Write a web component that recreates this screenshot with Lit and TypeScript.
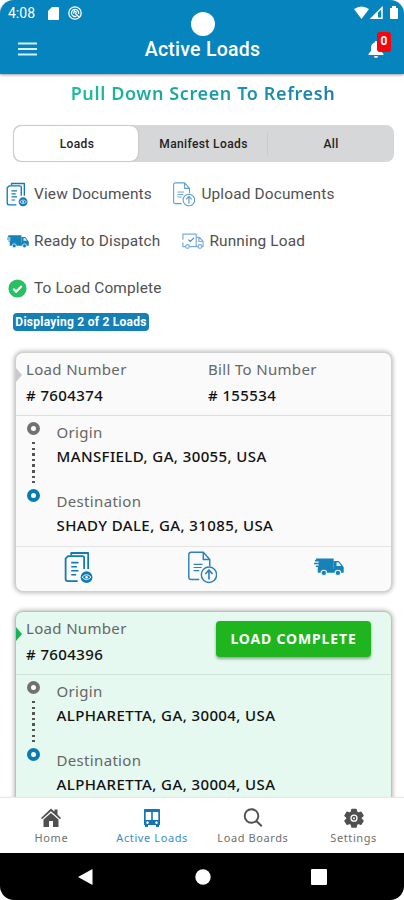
import { LitElement, html, css, svg, nothing } from "lit";
import { customElement, property } from "lit/decorators.js";
import { classMap } from "lit/directives/class-map.js";

const docLines = svg`<path d="M9 14h9M9 19h7M9 24h9M9 29h6" stroke-width="2"/>`;

const icons = {
  view: html`<svg viewBox="0 0 36 40" fill="none" stroke="#1179b5" stroke-width="2.2" stroke-linejoin="round">
    <path d="M9 5V2h21v20"/><path d="M17 37H5q-3 0-3-3V9l3-3h18q2 0 2 2v14"/>${docLines}
    <circle cx="28" cy="32" r="7.3" fill="#1179b5" stroke="none"/>
    <path d="M22.500 32q5.500-6 11 0q-5.500 6-11 0z" stroke="#fff" stroke-width="1.200"/><circle cx="28" cy="32" r="1.500" fill="#fff" stroke="none"/></svg>`,
  upload: html`<svg viewBox="0 0 36 40" fill="none" stroke="#2b80bf" stroke-width="1.800" stroke-linejoin="round">
    <path d="M14 35H4q-3 0-3-3V4q0-3 3-3h15l8 9v8M19 1v9h8"/><path d="M7 16h11M7 20h10M7 24h7" stroke-width="1.500"/>
    <circle cx="26" cy="29" r="9.500"/><path d="M26 35V24M21.500 28l4.500-5l4.500 5" stroke-width="2"/></svg>`,
  truck: html`<svg viewBox="0 0 32 20" fill="#1682b8">
    <path d="M2 1h19v12H4v-3H2V8.500h3V7H0V5.500h5V4H1V2.500h1z"/><path d="M21 3.500h5.500l4 5l1.200 2v5.500H4v-4h17z"/>
    <path d="M24 5h2.200l3 4H24z" fill="#d8edf8"/><g stroke="#e4f2f9" stroke-width="1.200"><circle cx="10.500" cy="16.300" r="2.900"/><circle cx="25.500" cy="16.300" r="2.900"/></g></svg>`,
  running: html`<svg viewBox="0 0 24 18" fill="none" stroke="#79addb" stroke-width="1.300">
    <path d="M4 14.500H1V10M1 7V1h14.500v13.500H8M15.500 4.500h3.500l4 4.500v5.500h-1.500M17.500 14.500h-2M18.500 5v4h4"/><path d="M7 7l2 2l4-4" stroke="#3689c8"/>
    <circle cx="6" cy="14.500" r="2"/><circle cx="19.500" cy="14.500" r="2"/></svg>`,
  done: html`<svg viewBox="0 0 20 20"><circle cx="10" cy="10" r="9.500" fill="#27c063"/><path d="M5.500 10.300l3 3l6-6" fill="none" stroke="#fff" stroke-width="2.300"/></svg>`,
  home: html`<svg viewBox="0 0 20 20" fill="#505050"><path d="M10 .5l3.500 3.300V1.500h3v5L20 10l-1 1.200L10 3.300L1 11.200L0 10z"/><path d="M10 5l7.500 6.500V19H12v-6H8v6H2.500v-7.500z"/></svg>`,
  bus: html`<svg viewBox="0 0 18 20" fill="#1476b4"><path fill-rule="evenodd" d="M2 1h14q1 0 1 1v15h-1v2h-3v-2H5v2H2v-2H1V2q0-1 1-1zM2.700 4v8h5.500V4zM9.800 4v8h5.500V4zM4.500 13.300a1.300 1.300 0 1 0 .01 0zM13.500 13.300a1.300 1.300 0 1 0 .01 0z"/></svg>`,
  search: html`<svg viewBox="0 0 20 20" fill="none" stroke="#505050" stroke-width="1.900"><circle cx="8.500" cy="8" r="6.800"/><path d="M13.300 13l5.500 5.300"/></svg>`,
  gear: html`<svg viewBox="0 0 20 20"><path fill="#505050" stroke="#505050" stroke-width="1.500" stroke-linejoin="round" d="M8 1.500h4l.6 2.700l1.900 1L17 4.300l2 3.400L17 9.500v1.500l2 1.800l-2 3.400l-2.600-.9l-1.800 1L12 19H8l-.6-2.700l-1.900-1L3 16.200l-2-3.400L3 11V9.500L1 7.700l2-3.400l2.500.9l1.900-1z"/><circle cx="10" cy="10.200" r="3" fill="none" stroke="#fff" stroke-width="1.300"/><circle cx="10" cy="10.200" r="1" fill="#fff"/></svg>`,
};

interface Load {
  number: string;
  billTo?: string;
  origin: string;
  destination: string;
  complete?: boolean;
}

const loads: Load[] = [
  { number: "7604374", billTo: "155534", origin: "MANSFIELD, GA, 30055, USA", destination: "SHADY DALE, GA, 31085, USA" },
  { number: "7604396", origin: "ALPHARETTA, GA, 30004, USA", destination: "ALPHARETTA, GA, 30004, USA", complete: true },
];

@customElement("load-card")
export class LoadCard extends LitElement {
  @property({ attribute: false }) load!: Load;

  static styles = css`
    :host { display: block; }
    * { box-sizing: border-box; }
    svg { display: block; }
    .card { position: relative; height: 240px; border: 1px solid #cfcfcf; border-radius: 8px; background: #fafafa;
      box-shadow: 0 0 4px 1px rgba(0, 0, 0, 0.27); font-family: "Noto Sans", sans-serif; color: #111; }
    .complete { background: #e5f9f0; border-color: #a3d3ad; }
    .marker { position: absolute; left: 0; top: 15px; border: 7px solid transparent; border-left: 6px solid #c9c9c9; border-right: 0; }
    .complete .marker { border-left-color: #17b557; }
    .head { display: grid; grid-template-columns: 182px 1fr; height: 63px; padding: 4px 0 0 10px; border-bottom: 1px solid #dedede; }
    .complete .head { border-color: #cfe3d9; }
    .label { font-size: 15px; line-height: 24px; letter-spacing: 0.33px; color: #666; white-space: nowrap; }
    .value { font-size: 15px; line-height: 25px; font-weight: 500; letter-spacing: 0.4px; white-space: nowrap; }
    .head .value { line-height: 29px; }
    .route { display: grid; grid-template-columns: 39.500px 1fr; height: 130px; padding: 4px 0 0 1px; }
    .rail { display: flex; flex-direction: column; align-items: center; padding: 2px 6px 0 0; }
    .ring { width: 13px; height: 13px; border: 4px solid #717171; border-radius: 50%; background: #fff; }
    .ring.to { border-color: #087bb5; }
    .dots { width: 2.500px; height: 41px; margin: 7px 1px 6px 0; background: repeating-linear-gradient(#555 0 2.500px, transparent 2.500px 5.600px); }
    .stop { height: 69px; }
    .actions { display: grid; grid-template-columns: repeat(3, 1fr); justify-items: center; height: 46px; border-top: 1px solid #e5e5e5; padding: 4px 2px 0 0; }
    .doc svg { width: 29px; height: 33px; }
    .ship { padding: 6px 0 0 4px; }
    .ship svg { width: 30px; height: 20px; }
    .button { width: 155px; height: 36px; margin: 5px 0 0 8px; padding: 0; border: 0; border-radius: 4px; background: #1eb51e; color: #fff;
      font: 700 14px/34px "Noto Sans", sans-serif; letter-spacing: 0.85px; box-shadow: 0 2px 3px rgba(0, 0, 0, 0.35); white-space: nowrap; }
  `;

  render() {
    const l = this.load;
    return html`<article class=${classMap({ card: true, complete: !!l.complete })}>
      <div class="marker"></div>
      <div class="head">
        <div><div class="label">Load Number</div><div class="value"># ${l.number}</div></div>
        ${l.complete
          ? html`<button class="button">LOAD COMPLETE</button>`
          : html`<div><div class="label">Bill To Number</div><div class="value"># ${l.billTo}</div></div>`}
      </div>
      <div class="route">
        <div class="rail"><div class="ring"></div><div class="dots"></div><div class="ring to"></div></div>
        <div>
          <div class="stop"><div class="label">Origin</div><div class="value">${l.origin}</div></div>
          <div class="stop"><div class="label">Destination</div><div class="value">${l.destination}</div></div>
        </div>
      </div>
      ${l.complete ? nothing : html`<div class="actions">
        <div class="doc">${icons.view}</div><div class="doc">${icons.upload}</div><div class="ship">${icons.truck}</div>
      </div>`}
    </article>`;
  }
}

@customElement("app-root")
export class AppRoot extends LitElement {
  static styles = css`
    :host { display: flex; flex-direction: column; width: 404px; height: 900px; overflow: hidden; background: #fff; font-family: Roboto, sans-serif; }
    * { box-sizing: border-box; }
    svg { display: block; }
    .top { position: relative; flex: none; height: 74px; background: #0684bd; color: #fff; border-radius: 14px 14px 0 0; box-shadow: 0 1px 3px rgba(0, 0, 0, 0.4); }
    .status { display: flex; align-items: center; height: 26px; padding: 0 6px 0 8px; font-size: 14px; }
    .time { width: 40px; letter-spacing: 0; }
    .status .sd { width: 11px; height: 13px; }
    .status .at { width: 14px; height: 14px; margin-left: 9px; }
    .status .signals { width: 44px; height: 14px; margin-left: auto; }
    .camera { position: absolute; left: 191px; top: 12px; width: 24px; height: 24px; border-radius: 50%; background: #fff; }
    .bar { display: grid; grid-template-columns: 56px 1fr 56px; align-items: center; height: 46px; text-align: center; }
    .menu { width: 19px; height: 14px; margin-left: 18px; }
    .title { font-size: 19.500px; font-weight: 500; letter-spacing: 0.25px; padding: 1px 0 0 1px; }
    .alerts { position: relative; width: 30px; height: 30px; margin-left: 9px; padding: 6px 0 0 11px; }
    .alerts svg { width: 16px; height: 18px; }
    .count { position: absolute; left: 20px; top: -2px; width: 14px; height: 20px; border-radius: 3px; background: #f5060b; font: 700 12px/19px Roboto, sans-serif; }
    .content { flex: 1; min-height: 0; overflow: hidden; }
    .pull { margin: 7px auto 0; width: max-content; padding-left: 2px; font: 600 18px/24px "Noto Sans", sans-serif; letter-spacing: 0.62px;
      background: linear-gradient(90deg, #1dbd98, #1a7faf); background-clip: text; color: transparent; }
    .segments { display: grid; grid-template-columns: 125px 129px 1fr; align-items: center; width: 381px; height: 37px; margin: 20px 0 0 13px;
      border-radius: 8px; background: #d5d7d8; text-align: center; font-size: 12px; font-weight: 500; letter-spacing: 0.38px; color: #222; }
    .segment { line-height: 37px; height: 35px; padding-left: 2px; white-space: nowrap; }
    .segment.on { margin-left: 1px; background: #fff; border-radius: 8px; box-shadow: 0 0 2px #aaa; }
    .segment.all { height: 24px; line-height: 25px; padding: 0; border-left: 1px solid #c8cacc; }
    .legend { display: grid; grid-auto-rows: 47px; margin-top: 9px; font-size: 15.400px; letter-spacing: 0.16px; color: #505050; white-space: nowrap; }
    .row, .item { display: flex; align-items: center; }
    .caption { padding-bottom: 2px; }
    .icon { flex: none; display: flex; align-items: center; justify-content: center; }
    .docs .icon { width: 23px; margin: 0 6px 0 5px; }
    .docs svg { width: 22px; height: 25px; }
    .docs .item + .item { margin-left: 15.500px; }
    .docs .item + .item .icon svg { opacity: 0.75; }
    .trucks .icon { width: 22px; margin: 0 5px 0 7px; }
    .trucks svg { width: 22px; height: 15px; }
    .trucks .item + .item { margin-left: 15px; }
    .trucks .item + .item svg { width: 23px; height: 17px; }
    .finish svg { width: 19px; height: 19px; }
    .finish .icon { margin: 0 7px 0 8px; }
    .shown { width: 136px; height: 18px; margin: 1px 0 0 13px; border-radius: 4px; background: #157fb7; color: #fff; text-align: center;
      font-size: 12px; line-height: 19px; font-weight: 700; letter-spacing: 0.25px; white-space: nowrap; }
    .cards { display: grid; gap: 19px; padding: 21px 12px 0 15px; }
    .tabs { position: relative; flex: none; display: grid; grid-template-columns: repeat(4, 1fr); height: 55px; padding: 10px 0 0 1px; background: #fff; box-shadow: 0 -1px 1px #e8e8e8; }
    .tab { display: flex; flex-direction: column; align-items: center; gap: 3px; font: 11px/14px "Noto Sans", sans-serif; letter-spacing: 0.6px; color: #707070; white-space: nowrap; }
    .tab.on { color: #3b8dc6; }
    .tab svg { width: 20px; height: 20px; }
    .system { flex: none; height: 47px; background: #000; border-radius: 0 0 14px 14px; display: grid; grid-template-columns: 143px 119px 1fr; align-items: center; }
    .system svg { height: 16px; width: 16px; }
    .back { justify-self: center; padding-left: 26px; }
    .hom { justify-self: center; }
    .recent { padding-left: 49px; }
  `;

  private item(icon: unknown, text: string) {
    return html`<div class="item"><span class="icon">${icon}</span><span class="caption">${text}</span></div>`;
  }

  render() {
    return html`
      <header class="top">
        <div class="status">
          <span class="time">4:08</span>
          <svg class="sd" viewBox="0 0 11 13" fill="#fff"><path d="M4 0h6q1 0 1 1v11q0 1-1 1H1q-1 0-1-1V4z"/></svg>
          <svg class="at" viewBox="0 0 14 14" fill="none" stroke="#fff" stroke-width="1.300"><circle cx="7" cy="7" r="6.200"/><path d="M8.500 10.200a3.600 3.600 0 1 1 2-2.200M5.500 7.500l1-2.500l2.500 1.500M7 7l4 4"/></svg>
          <svg class="signals" viewBox="0 0 44 14"><path d="M0 3q7.500-5 15 0L7.500 13z" fill="#fff"/><path d="M17.500 12.300L28 1.800v10.500z" fill="none" stroke="#fff" stroke-width="1.500"/><path d="M17 13l7-7v7z" fill="#fff"/><path d="M36 2h2V0h4v2h1q1 0 1 1v9q0 1-1 1h-6q-1 0-1-1V2z" fill="#fff"/></svg>
        </div>
        <div class="bar">
          <svg class="menu" viewBox="0 0 19 14" stroke="#d8eff9" stroke-width="2.200"><path d="M0 1.500h19M0 7h19M0 12.500h19"/></svg>
          <div class="title">Active Loads</div>
          <div class="alerts"><svg viewBox="0 0 16 18" fill="#fff"><path d="M8 1q1.300 0 1.300 1.400Q13 3.400 13 8v3l2.500 3v1H.5v-1L3 11V8q0-4.600 3.700-5.600Q6.700 1 8 1zM6 16h4q0 2-2 2t-2-2z"/></svg><span class="count">0</span></div>
        </div>
        <div class="camera"></div>
      </header>
      <main class="content">
        <div class="pull">Pull Down Screen To Refresh</div>
        <div class="segments"><div class="segment on">Loads</div><div class="segment">Manifest Loads</div><div class="segment all">All</div></div>
        <div class="legend">
          <div class="row docs">${this.item(icons.view, "View Documents")}${this.item(icons.upload, "Upload Documents")}</div>
          <div class="row trucks">${this.item(icons.truck, "Ready to Dispatch")}${this.item(icons.running, "Running Load")}</div>
          <div class="row finish">${this.item(icons.done, "To Load Complete")}</div>
        </div>
        <div class="shown">Displaying 2 of 2 Loads</div>
        <div class="cards">${loads.map((l) => html`<load-card .load=${l}></load-card>`)}</div>
      </main>
      <nav class="tabs">
        <div class="tab">${icons.home}Home</div><div class="tab on">${icons.bus}Active Loads</div><div class="tab">${icons.search}Load Boards</div><div class="tab">${icons.gear}Settings</div>
      </nav>
      <footer class="system">
        <div class="back"><svg viewBox="0 0 16 16" fill="#fff"><path d="M15.500 0v16L1 8z"/></svg></div>
        <div class="hom"><svg viewBox="0 0 16 16" fill="#fff"><circle cx="8" cy="8" r="7.700"/></svg></div>
        <div class="recent"><svg viewBox="0 0 16 16" fill="#fff"><rect width="16" height="16" rx="1"/></svg></div>
      </footer>`;
  }
}
